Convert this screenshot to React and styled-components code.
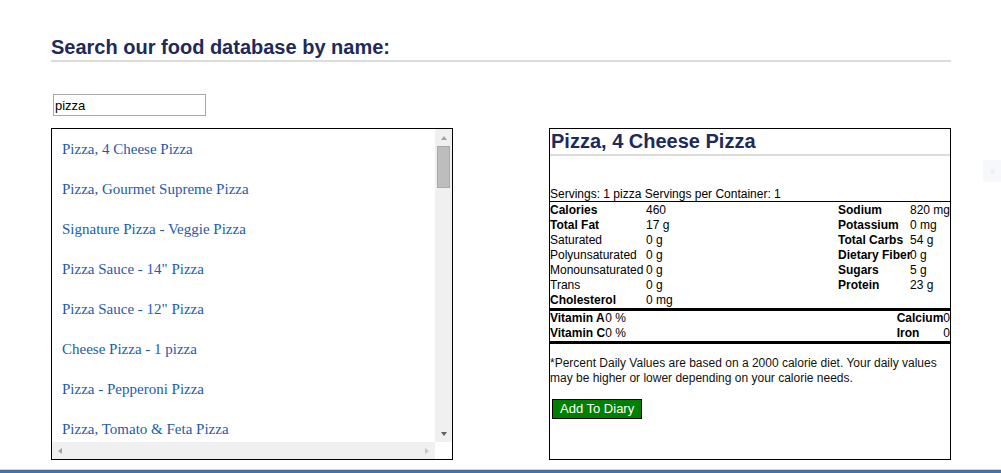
import React from 'react'
import styled, { createGlobalStyle } from 'styled-components'

const GlobalStyle = createGlobalStyle`
  html, body {
    margin: 0;
    padding: 0;
    background: #fff;
  }
  body {
    font-family: "Liberation Sans", Arial, sans-serif;
    font-size: 12px;
    color: #000;
  }
`

const Page = styled.div`
  padding: 36px 0 0 51px;
  width: 900px;
`

const Heading = styled.h2`
  margin: 0;
  font-size: 20px;
  line-height: 23px;
  font-weight: bold;
  color: #1d2a5b;
  padding-bottom: 1px;
  border-bottom: 2px solid #dcdcdc;
`

const SearchInput = styled.input`
  display: block;
  box-sizing: border-box;
  margin: 32px 0 0 2px;
  width: 153px;
  height: 22px;
  border: 1px solid #a9a9a9;
  padding: 0 1px;
  font-family: "Liberation Sans", Arial, sans-serif;
  font-size: 13px;
  color: #000;
  outline: none;
`

const Columns = styled.div`
  display: flex;
  justify-content: space-between;
  margin-top: 12px;
  height: 332px;
`

const ListFrame = styled.div`
  box-sizing: border-box;
  width: 402px;
  height: 100%;
  border: 1px solid #000;
  display: grid;
  grid-template-columns: 1fr 17px;
  grid-template-rows: 1fr 17px;
`

const Items = styled.ul`
  list-style: none;
  margin: 0;
  padding: 0;
  overflow: hidden;
`

const Item = styled.li`
  padding: 12px 10px 11px;
  line-height: 17px;
  font-family: "Liberation Serif", "Times New Roman", serif;
  font-size: 15px;
  color: #1c5cab;
  white-space: nowrap;
  cursor: pointer;
`

const VScroll = styled.div`
  background: #f0f0f0;
  display: flex;
  flex-direction: column;
  align-items: center;
`

const HScroll = styled.div`
  background: #f0f0f0;
  display: flex;
  align-items: center;
  justify-content: space-between;
  padding: 0 6px;
`

const Corner = styled.div`
  background: #fff;
`

const ArrowBox = styled.div`
  height: 17px;
  width: 17px;
  display: flex;
  align-items: center;
  justify-content: center;
  margin-top: ${p => (p.$bottom ? 'auto' : '0')};
`

const Tri = styled.span`
  width: 0;
  height: 0;
  border-style: solid;
  ${p => p.$dir === 'up' && `
    border-width: 0 3.5px 4px 3.5px;
    border-color: transparent transparent ${p.$color} transparent;
  `}
  ${p => p.$dir === 'down' && `
    border-width: 4px 3.5px 0 3.5px;
    border-color: ${p.$color} transparent transparent transparent;
  `}
  ${p => p.$dir === 'left' && `
    border-width: 3.5px 4px 3.5px 0;
    border-color: transparent ${p.$color} transparent transparent;
  `}
  ${p => p.$dir === 'right' && `
    border-width: 3.5px 0 3.5px 4px;
    border-color: transparent transparent transparent ${p.$color};
  `}
`

const Thumb = styled.div`
  box-sizing: border-box;
  width: 13px;
  height: 42px;
  background: #bdbdbd;
  border: 1px solid #a9a9a9;
`

const Detail = styled.div`
  box-sizing: border-box;
  width: 402px;
  height: 100%;
  border: 1px solid #000;
`

const Title = styled.h3`
  margin: 0;
  padding: 1px 0 1px 1px;
  font-size: 20px;
  line-height: 23px;
  font-weight: bold;
  color: #1d2a5b;
  border-bottom: 2px solid #dcdcdc;
`

const Servings = styled.div`
  margin-top: 31px;
  line-height: 14px;
  border-bottom: 1px solid #000;
`

const NutrientGrid = styled.div`
  display: grid;
  grid-template-columns: ${p => p.$cols};
  grid-auto-rows: 15px;
  line-height: 15px;
  padding-top: ${p => (p.$padTop ? '1px' : '0')};
  border-bottom: 3px solid #000;
  white-space: nowrap;
`

const Label = styled.div`
  font-weight: ${p => (p.$bold ? 'bold' : 'normal')};
`

const Value = styled.div`
  text-align: ${p => (p.$right ? 'right' : 'left')};
`

const Footnote = styled.p`
  margin: 12px 0 0;
  line-height: 15px;
  color: #111;
`

const AddButton = styled.button`
  display: block;
  margin: 13px 0 0 2px;
  height: 20px;
  padding: 0 7px;
  border: 1px solid #000;
  background: #008000;
  color: #fff;
  font-family: "Liberation Sans", Arial, sans-serif;
  font-size: 13px;
  line-height: 18px;
  cursor: pointer;
`

const Footer = styled.div`
  margin-top: 9px;
  border-top: 1px solid #cfd3d9;
  height: 10px;
  background: #4a6ea8;
`

const SideTab = styled.div`
  position: fixed;
  right: 0;
  top: 160px;
  width: 18px;
  height: 22px;
  background: #f6f8fc;
  display: flex;
  align-items: center;
  justify-content: center;
  &::after {
    content: '';
    width: 5px;
    height: 5px;
    border-radius: 50%;
    background: #eceff5;
  }
`

const foods = [
  'Pizza, 4 Cheese Pizza',
  'Pizza, Gourmet Supreme Pizza',
  'Signature Pizza - Veggie Pizza',
  'Pizza Sauce - 14" Pizza',
  'Pizza Sauce - 12" Pizza',
  'Cheese Pizza - 1 pizza',
  'Pizza - Pepperoni Pizza',
  'Pizza, Tomato & Feta Pizza',
]

const nutrients = [
  ['Calories', true, '460', 'Sodium', true, '820 mg'],
  ['Total Fat', true, '17 g', 'Potassium', true, '0 mg'],
  ['Saturated', false, '0 g', 'Total Carbs', true, '54 g'],
  ['Polyunsaturated', false, '0 g', 'Dietary Fiber', true, '0 g'],
  ['Monounsaturated', false, '0 g', 'Sugars', true, '5 g'],
  ['Trans', false, '0 g', 'Protein', true, '23 g'],
  ['Cholesterol', true, '0 mg', '', false, ''],
]

const vitamins = [
  ['Vitamin A', '0 %', 'Calcium', '0'],
  ['Vitamin C', '0 %', 'Iron', '0'],
]

export default function App() {
  return (
    <>
      <GlobalStyle />
      <Page>
        <Heading>Search our food database by name:</Heading>
        <SearchInput defaultValue="pizza" />
        <Columns>
          <ListFrame>
            <Items>
              {foods.map(f => (
                <Item key={f}>{f}</Item>
              ))}
            </Items>
            <VScroll>
              <ArrowBox>
                <Tri $dir="up" $color="#a3a3a3" />
              </ArrowBox>
              <Thumb />
              <ArrowBox $bottom>
                <Tri $dir="down" $color="#606060" />
              </ArrowBox>
            </VScroll>
            <HScroll>
              <Tri $dir="left" $color="#a3a3a3" />
              <Tri $dir="right" $color="#c4c4c4" />
            </HScroll>
            <Corner />
          </ListFrame>

          <Detail>
            <Title>Pizza, 4 Cheese Pizza</Title>
            <Servings>Servings: 1 pizza Servings per Container: 1</Servings>
            <NutrientGrid $cols="96px 1fr 72px 40px" $padTop>
              {nutrients.map(([l1, b1, v1, l2, b2, v2]) => (
                <React.Fragment key={l1}>
                  <Label $bold={b1}>{l1}</Label>
                  <Value>{v1}</Value>
                  <Label $bold={b2}>{l2}</Label>
                  <Value>{v2}</Value>
                </React.Fragment>
              ))}
            </NutrientGrid>
            <NutrientGrid $cols="max-content 1fr max-content max-content">
              {vitamins.map(([l1, v1, l2, v2]) => (
                <React.Fragment key={l1}>
                  <Label $bold>{l1}</Label>
                  <Value>{v1}</Value>
                  <Label $bold>{l2}</Label>
                  <Value $right>{v2}</Value>
                </React.Fragment>
              ))}
            </NutrientGrid>
            <Footnote>
              *Percent Daily Values are based on a 2000 calorie diet. Your daily values may be
              higher or lower depending on your calorie needs.
            </Footnote>
            <AddButton>Add To Diary</AddButton>
          </Detail>
        </Columns>
      </Page>
      <Footer />
      <SideTab />
    </>
  )
}
